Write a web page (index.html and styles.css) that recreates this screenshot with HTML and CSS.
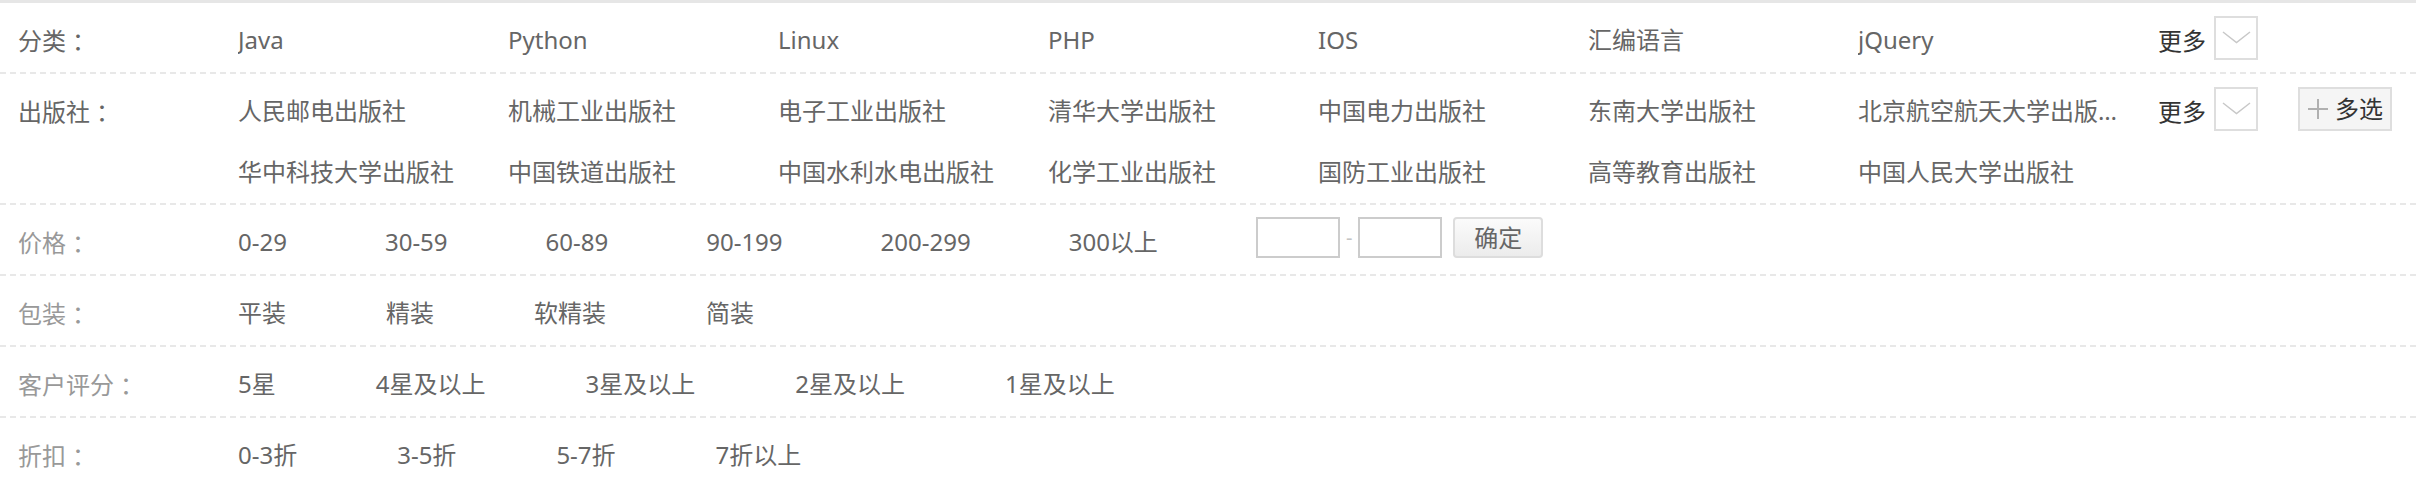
FILE: index.html
```html
<!DOCTYPE html>
<html lang="zh-CN">
<head>
<meta charset="utf-8">
<title>筛选</title>
<link rel="stylesheet" href="styles.css">
</head>
<body>
<div class="filter">
  <div class="row">
    <div class="label">分类<span class="colon">：</span></div>
    <ul class="vals grid">
      <li>Java</li><li>Python</li><li>Linux</li><li>PHP</li><li>IOS</li><li>汇编语言</li><li>jQuery</li>
    </ul>
    <div class="ops">
      <span class="more">更多</span>
      <span class="drop"><svg width="40" height="40" viewBox="0 0 40 40"><polyline points="7,14 20.5,24.5 34,14" fill="none" stroke="#c8c8c8" stroke-width="1.5"/></svg></span>
    </div>
  </div>
  <div class="row">
    <div class="label">出版社<span class="colon">：</span></div>
    <ul class="vals grid">
      <li>人民邮电出版社</li><li>机械工业出版社</li><li>电子工业出版社</li><li>清华大学出版社</li><li>中国电力出版社</li><li>东南大学出版社</li><li>北京航空航天大学出版社</li>
      <li>华中科技大学出版社</li><li>中国铁道出版社</li><li>中国水利水电出版社</li><li>化学工业出版社</li><li>国防工业出版社</li><li>高等教育出版社</li><li>中国人民大学出版社</li>
    </ul>
    <div class="ops">
      <span class="more">更多</span>
      <span class="drop"><svg width="40" height="40" viewBox="0 0 40 40"><polyline points="7,14 20.5,24.5 34,14" fill="none" stroke="#c8c8c8" stroke-width="1.5"/></svg></span>
      <span class="multi"><svg width="22" height="22" viewBox="0 0 22 22"><path d="M11 1V21M1 11H21" stroke="#b0b0b0" stroke-width="2" fill="none"/></svg><span class="multi-text">多选</span></span>
    </div>
  </div>
  <div class="row">
    <div class="label light">价格<span class="colon">：</span></div>
    <ul class="vals inline tight">
      <li>0-29</li><li>30-59</li><li>60-89</li><li>90-199</li><li>200-299</li><li>300以上</li>
      <li class="range">
        <input class="price-in" type="text">
        <span class="sep">-</span>
        <input class="price-in" type="text">
        <button class="ok" type="button">确定</button>
      </li>
    </ul>
  </div>
  <div class="row">
    <div class="label light">包装<span class="colon">：</span></div>
    <ul class="vals inline">
      <li>平装</li><li>精装</li><li>软精装</li><li>简装</li>
    </ul>
  </div>
  <div class="row">
    <div class="label light">客户评分<span class="colon">：</span></div>
    <ul class="vals inline">
      <li>5星</li><li>4星及以上</li><li>3星及以上</li><li>2星及以上</li><li>1星及以上</li>
    </ul>
  </div>
  <div class="row">
    <div class="label light">折扣<span class="colon">：</span></div>
    <ul class="vals inline">
      <li>0-3折</li><li>3-5折</li><li>5-7折</li><li>7折以上</li>
    </ul>
  </div>
</div>
</body>
</html>
```

FILE: styles.css
```css
html, body {
  margin: 0;
  padding: 0;
  background: #fff;
}
body {
  font-family: "Noto Sans", "Noto Sans CJK SC", sans-serif;
  font-size: 24px;
  color: #666;
}
.filter {
  border-top: 3px solid #e6e6e6;
}
.row {
  display: flex;
  align-items: flex-start;
  padding: 6px 0 1px;
  border-bottom: 2px dashed #e8e8e8;
}
.label {
  flex: 0 0 auto;
  width: 220px;
  padding-left: 18px;
  line-height: 61px;
  color: #666;
  white-space: nowrap;
}
.label.light {
  color: #999;
}
.colon {
  font-family: "Noto Sans CJK SC", sans-serif;
  margin-left: 6px;
}
.vals {
  list-style: none;
  margin: 0;
  padding: 0;
  display: flex;
}
.vals li {
  line-height: 61px;
  white-space: nowrap;
}
.vals.grid {
  width: 1890px;
  flex-wrap: wrap;
}
.vals.grid li {
  width: 262px;
  margin-right: 8px;
  overflow: hidden;
  text-overflow: ellipsis;
}
.vals.inline li {
  margin-right: 100px;
}
.vals.inline.tight li {
  margin-right: 98px;
}
.ops {
  display: flex;
  align-items: center;
  height: 61px;
  margin-left: 30px;
}
.more {
  color: #333;
}
.drop {
  display: flex;
  width: 40px;
  height: 40px;
  border: 2px solid #dedede;
  margin-left: 8px;
  margin-bottom: 4px;
}
.multi {
  display: flex;
  align-items: center;
  box-sizing: border-box;
  width: 94px;
  height: 44px;
  margin-left: 40px;
  margin-bottom: 4px;
  border: 2px solid #dedede;
  background: #f5f5f5;
  padding-left: 7px;
  color: #333;
}
.multi-text {
  margin-left: 6px;
  line-height: 40px;
}
.vals.inline li.range {
  display: flex;
  align-items: center;
  height: 61px;
  margin-right: 0;
}
.price-in {
  box-sizing: border-box;
  width: 84px;
  height: 41px;
  border: 2px solid #cccccc;
  margin: 0 0 8px 0;
  padding: 0;
  background: #fff;
  outline: none;
}
.sep {
  color: #c4c4c4;
  font-size: 20px;
  line-height: 20px;
  margin: 0 6px 8px 6px;
}
.ok {
  box-sizing: border-box;
  width: 90px;
  height: 41px;
  margin: 0 0 8px 11px;
  padding: 0;
  border: 2px solid #dddddd;
  border-radius: 4px;
  background: linear-gradient(#fbfbfb, #ececec);
  color: #666;
  font-family: "Noto Sans", "Noto Sans CJK SC", sans-serif;
  font-size: 24px;
  line-height: 37px;
}
```
